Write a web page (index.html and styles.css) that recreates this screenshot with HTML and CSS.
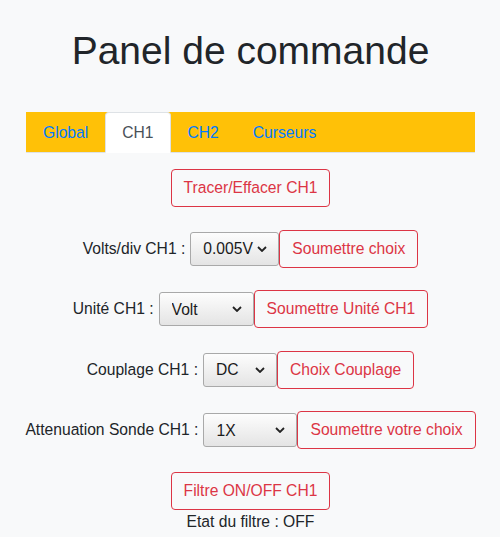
FILE: index.html
```html
<!DOCTYPE html>
<html lang="fr">

<head>
    <meta charset="UTF-8"/>
    <meta content="width=device-width, initial-scale=1.0" name="viewport"/>
    <title>Panel de commande</title>
    <link rel="stylesheet" href="styles.css">
</head>

<body>
    <div class="panel">
        <h1 class="panel-title">Panel de commande</h1>

        <!-- onglets -->
        <ul class="tabs">
            <li><a class="tab-link" href="#">Global</a></li>
            <li><a class="tab-link active" href="#">CH1</a></li>
            <li><a class="tab-link" href="#">CH2</a></li>
            <li><a class="tab-link" href="#">Curseurs</a></li>
        </ul>

        <!-- réglages du canal 1 -->
        <div class="controls">
            <button class="btn-red" type="button">Tracer/Effacer CH1</button>

            <div class="row">
                <label class="row-label" for="volts">Volts/div CH1 :</label>
                <span class="pick pick-volts">
                    <select id="volts">
                        <option>0.005V</option>
                        <option>0.01V</option>
                        <option>0.02V</option>
                        <option>0.05V</option>
                        <option>0.1V</option>
                        <option>0.2V</option>
                        <option>0.5V</option>
                        <option>1V</option>
                        <option>2V</option>
                        <option>5V</option>
                    </select>
                    <svg class="pick-arrow" viewBox="0 0 10 6"><path d="M1 1l4 4 4-4"/></svg>
                </span><button class="btn-red" type="button">Soumettre choix</button>
            </div>

            <div class="row">
                <label class="row-label" for="unite">Unité CH1 :</label>
                <span class="pick pick-unite">
                    <select id="unite">
                        <option>Volt</option>
                        <option>milliVolt</option>
                    </select>
                    <svg class="pick-arrow" viewBox="0 0 10 6"><path d="M1 1l4 4 4-4"/></svg>
                </span><button class="btn-red" type="button">Soumettre Unité CH1</button>
            </div>

            <div class="row">
                <label class="row-label" for="couplage">Couplage CH1 :</label>
                <span class="pick pick-couplage">
                    <select id="couplage">
                        <option>DC</option>
                        <option>AC</option>
                        <option>GND</option>
                    </select>
                    <svg class="pick-arrow" viewBox="0 0 10 6"><path d="M1 1l4 4 4-4"/></svg>
                </span><button class="btn-red" type="button">Choix Couplage</button>
            </div>

            <div class="row">
                <label class="row-label" for="sonde">Attenuation Sonde CH1 :</label>
                <span class="pick pick-sonde">
                    <select id="sonde">
                        <option>1X</option>
                        <option>10X</option>
                        <option>100X</option>
                    </select>
                    <svg class="pick-arrow" viewBox="0 0 10 6"><path d="M1 1l4 4 4-4"/></svg>
                </span><button class="btn-red" type="button">Soumettre votre choix</button>
            </div>

            <div class="filter">
                <button class="btn-red" type="button">Filtre ON/OFF CH1</button>
                <p class="filter-state">Etat du filtre : OFF</p>
            </div>
        </div>
    </div>
</body>

</html>
```

FILE: styles.css
```css
* {
    margin: 0;
    padding: 0;
    box-sizing: border-box;
}

body {
    background: #f8f9fa;
    color: #212529;
    font: 15.65px/24px "Liberation Sans", Arial, sans-serif;
}

.panel {
    padding: 0 25px 0 26px;
}

.panel-title {
    margin: 27px 0 38px;
    font-size: 39px;
    font-weight: 400;
    line-height: 47px;
    text-align: center;
}

/* onglets */
.tabs {
    display: flex;
    list-style: none;
    background: #ffc107;
    border-bottom: 1px solid #dee2e6;
}

.tab-link {
    display: block;
    margin-bottom: -1px;
    padding: 8px 16px 7px;
    border: 1px solid transparent;
    border-radius: 4px 4px 0 0;
    color: #007bff;
    text-decoration: none;
}

.tab-link.active {
    color: #495057;
    background: #fff;
    border-color: #dee2e6 #dee2e6 #fff;
}

/* réglages */
.controls {
    display: flex;
    flex-direction: column;
    align-items: center;
    gap: 22.5px;
    margin-top: 16px;
}

.row {
    display: flex;
    align-items: center;
    white-space: nowrap;
}

.row > * {
    flex-shrink: 0;
}

.row-label {
    margin-right: 5px;
}

.btn-red {
    padding: 6px 12px;
    border: 1px solid #dc3545;
    border-radius: 4px;
    background: transparent;
    color: #dc3545;
    font: 15.65px/24px "Liberation Sans", Arial, sans-serif;
    white-space: nowrap;
    cursor: pointer;
}

.pick {
    position: relative;
    display: block;
}

.pick select {
    display: block;
    width: 100%;
    height: 34px;
    padding: 0 24px 0 12px;
    border: 1px solid #a9a9a9;
    border-radius: 3px;
    background: linear-gradient(#fdfdfd, #e4e4e4);
    color: #1b1b1b;
    font: 15.65px "Liberation Sans", Arial, sans-serif;
    appearance: none;
    -webkit-appearance: none;
    outline: none;
}

.pick-arrow {
    position: absolute;
    right: 12px;
    top: 14px;
    width: 10px;
    height: 6px;
    fill: none;
    stroke: #222;
    stroke-width: 1.8;
    pointer-events: none;
}

.pick-volts {
    width: 89px;
}

.pick-unite {
    width: 95px;
}

.pick-couplage {
    width: 74px;
}

.pick-sonde {
    width: 94px;
}

.filter {
    display: flex;
    flex-direction: column;
    align-items: center;
}

.filter-state {
    line-height: 24px;
}
```
